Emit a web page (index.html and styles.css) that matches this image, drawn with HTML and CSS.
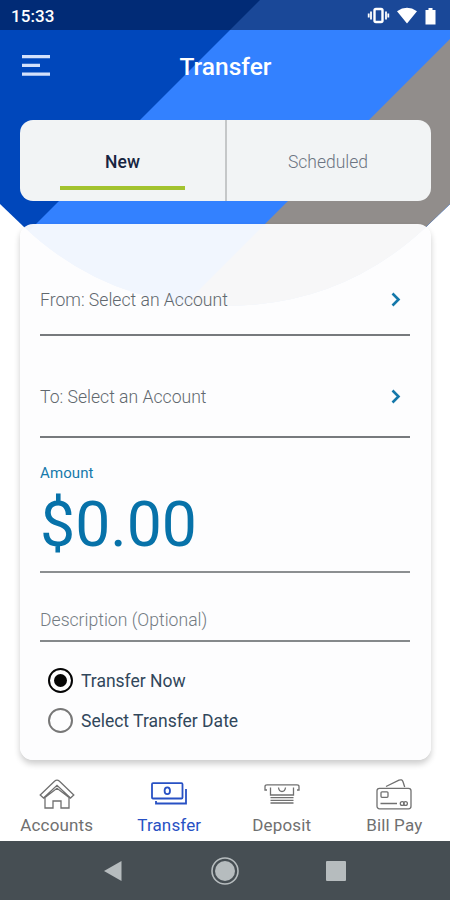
FILE: index.html
```html
<!DOCTYPE html>
<html lang="en">
<head>
<meta charset="utf-8">
<title>Transfer</title>
<link rel="stylesheet" href="styles.css">
</head>
<body>
<div class="screen">
  <svg class="backdrop" viewBox="0 0 450 320" aria-hidden="true">
    <defs><clipPath id="bowl"><path d="M0 0H450V204L426 227Q342 306 225 306Q108 306 24 227L0 204Z"/></clipPath></defs>
    <g clip-path="url(#bowl)">
      <path fill="#0047bb" d="M0 0H450V320H0Z"/>
      <path fill="#3381ff" d="M260 0H450V320H-60Z"/>
      <path fill="#918d8b" d="M489 0V320H169Z"/>
    </g>
  </svg>
  <header class="status">
    <span class="clock">15:33</span>
    <svg class="status-icons" viewBox="0 0 72 20" aria-hidden="true">
      <g fill="none" stroke="#fff"><rect x="8.500" y="3" width="8" height="13" rx="1.500" stroke-width="2.400"/><path stroke-width="1.800" d="M5 5.500v8M20 5.500v8M2.700 7.500v4M22.300 7.500v4"/></g>
      <path fill="#fff" d="M31 5.200Q41 -1.500 51 5.200L41 17.500ZM59.500 4h3V2h4v2h3V18.500H59.500Z"/>
    </svg>
  </header>
  <div class="titlebar">
    <svg class="menu" viewBox="0 0 28 21" aria-hidden="true"><path fill="#d4e1fb" d="M0 0h28v3.300H0zM0 8.800h18v3.300H0zM0 17.500h28v3.300H0z"/></svg>
    <h1>Transfer</h1>
  </div>
  <div class="tabs">
    <div class="tab active"><span>New</span></div>
    <div class="tab"><span>Scheduled</span></div>
  </div>
  <main class="card">
    <div class="row from"><span>From: Select an Account</span><svg class="chev" viewBox="0 0 10 15"><path d="M1.500 1.500l6 6-6 6"/></svg></div>
    <div class="row to"><span>To: Select an Account</span><svg class="chev" viewBox="0 0 10 15"><path d="M1.500 1.500l6 6-6 6"/></svg></div>
    <div class="amount"><label>Amount</label><div class="money">$0.00</div></div>
    <div class="desc"><span>Description (Optional)</span></div>
    <div class="radios">
      <div class="radio on"><i></i><span>Transfer Now</span></div>
      <div class="radio"><i></i><span>Select Transfer Date</span></div>
    </div>
  </main>
  <nav class="nav">
    <div class="item">
      <svg viewBox="0 0 36 32"><path d="M4.500 20L1.200 17 15.500 3.200Q18 1 20.500 3.200L34.800 17 31.500 20 18 7.300ZM6 19.500V30H14V23H22V30H30V19.500M6 19.500L18 10.300 30 19.500"/></svg>
      <span>Accounts</span>
    </div>
    <div class="item current">
      <svg viewBox="0 0 36 32"><rect x="1" y="5.200" width="30.500" height="15.300" rx="1"/><ellipse cx="16.300" cy="12.800" rx="2.700" ry="3.400"/><path d="M35 11V25.500H5V23"/></svg>
      <span>Transfer</span>
    </div>
    <div class="item">
      <svg viewBox="0 0 36 32"><path d="M3 12H1V8.500Q1 6.800 3 6.800H33Q35 6.800 35 8.500V12H33M6.500 9.500V17H29.500V9.500M14.500 9.500Q15 13.500 18 13.500T21.500 9.500M6.500 19.700H29.500M6.500 22.300H29.500M6.500 25H29.500"/></svg>
      <span>Deposit</span>
    </div>
    <div class="item">
      <svg viewBox="0 0 36 32"><rect x="1" y="10.300" width="34" height="20.500" rx="2.500"/><path d="M10 8.500L23 2.200Q26 1 27 3.700L28.700 9M4.500 25.500H21"/><rect x="5" y="13.800" width="7" height="5.500" rx="1"/><circle cx="26.200" cy="25.500" r="1.900"/><circle cx="29.500" cy="25.500" r="1.900"/></svg>
      <span>Bill Pay</span>
    </div>
  </nav>
  <footer class="system">
    <svg class="back" viewBox="0 0 18 22"><path d="M0 11L17.500 1V21Z"/></svg>
    <svg class="home" viewBox="0 0 28 28"><circle cx="14" cy="14" r="10"/><circle class="ring" cx="14" cy="14" r="13"/></svg>
    <i class="recent"></i>
  </footer>
</div>
</body>
</html>
```
FILE: styles.css
```css
* { box-sizing: border-box; }
body { margin: 0; background: #fff; font-family: Roboto, "Liberation Sans", sans-serif; }
.screen { position: relative; isolation: isolate; width: 450px; height: 900px; overflow: hidden; display: flex; flex-direction: column; }
.backdrop { position: absolute; z-index: -1; top: 0; left: 0; width: 450px; height: 320px; }
svg { display: block; flex: none; }
span, label { white-space: nowrap; }
.status { height: 30px; background: rgba(2, 16, 50, .5); display: flex; justify-content: space-between; align-items: center; padding: 1px 11px 0; }
.clock { color: #fff; font-size: 17px; font-weight: 500; letter-spacing: .1px; line-height: 20px; }
.status-icons { width: 72px; height: 20px; margin-right: 1px; }
.titlebar { height: 90px; display: grid; grid-template-columns: 28px 1fr 28px; padding: 25px 22px 0; }
.menu { width: 28px; height: 21px; }
h1 { margin: -3px 0 0 1px; text-align: center; color: #fff; font-size: 24.500px; line-height: 30px; font-weight: 500; }
.tabs { height: 81px; width: 411px; margin-left: 20px; border-radius: 13px; background: #f2f4f5; display: grid; grid-template-columns: 207px 1fr; flex: none; }
.tab { display: flex; justify-content: center; align-items: center; color: #6c7482; font-size: 17.500px; font-weight: 300; padding: 2px 2px 0 0; }
.tab.active { color: #172440; font-weight: 500; border-right: 2px solid #c5c7c8; flex-direction: column; padding: 2px 0 0; }
.tab.active::after { content: ""; width: 125px; height: 4px; background: #a3c32f; margin: 14px 0 -18px; }
.card { width: 411px; height: 536px; margin: 23px 0 0 20px; padding: 0 21px 0 20px; border-radius: 13px; background: rgba(253, 253, 254, .945); box-shadow: 0 4px 6px rgba(0, 0, 0, .2); flex: none; color: #61686e; font-size: 17.600px; font-weight: 300; }
.row { display: flex; justify-content: space-between; border-bottom: 2px solid #777a7d; line-height: 24px; padding-right: 9px; }
.from { height: 112px; padding-top: 64px; }
.to { height: 102px; padding-top: 49px; }
.chev { width: 10px; height: 15px; margin-top: 4px; fill: none; stroke: #1478aa; stroke-width: 2.6; }
.amount { height: 135px; border-bottom: 2px solid #8c8f91; padding-top: 25px; color: #1679ab; }
.amount label { display: block; font-size: 15px; line-height: 20px; font-weight: 400; letter-spacing: .1px; }
.money { color: #0772a9; font-size: 62.500px; font-weight: 400; line-height: 80px; padding-top: 2px; }
.desc { height: 69px; border-bottom: 2px solid #85898b; padding-top: 35px; line-height: 24px; color: #737b82; }
.radios { padding: 18px 0 0 8px; color: #31475b; font-weight: 400; font-size: 17.500px; }
.radio { height: 40px; display: flex; align-items: center; gap: 8px; }
.radio span { padding-top: 2px; }
.radio i { width: 25px; height: 25px; border: 2px solid #777; border-radius: 50%; display: grid; place-items: center; }
.radio.on i { border-color: #050505; }
.radio.on i::after { content: ""; width: 13px; height: 13px; border-radius: 50%; background: #050505; }
.nav { height: 81px; display: grid; grid-template-columns: repeat(4, 112.500px); padding-top: 18px; color: #707070; flex: none; font-size: 17px; letter-spacing: .15px; }
.item { display: flex; flex-direction: column; align-items: center; line-height: 20px; padding-left: 1px; }
.item svg { width: 36px; height: 32px; fill: none; stroke: currentColor; stroke-width: 1.3; }
.item span { margin-top: 5px; }
.current { color: #2851c4; }
.current svg { stroke-width: 1.8; }
.system { height: 59px; background: #464e53; display: flex; align-items: center; padding-left: 104px; flex: none; }
.system svg { fill: #b6bcbe; }
.back { width: 18px; height: 22px; }
.home { width: 28px; height: 28px; margin: 0 87px 0 89px; }
.system .ring { fill: none; stroke: #b6bcbe; stroke-width: 1.6; }
.recent { width: 20px; height: 20px; background: #b6bcbe; border-radius: 1px; }
```
